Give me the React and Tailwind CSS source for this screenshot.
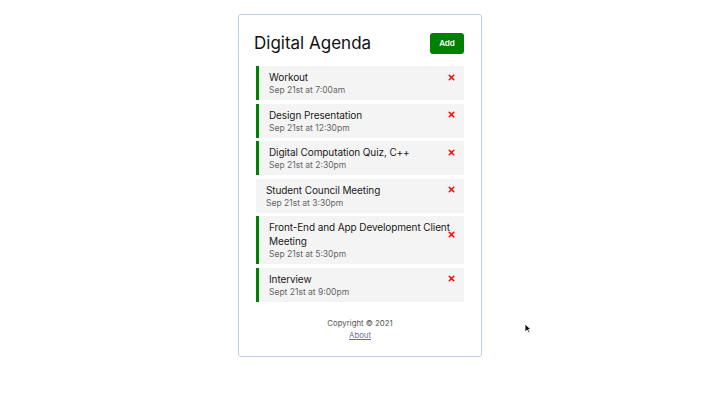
import { X } from "lucide-react";

const tasks = [
  { id: 1, text: "Workout", day: "Sep 21st at 7:00am", reminder: true },
  { id: 2, text: "Design Presentation", day: "Sep 21st at 12:30pm", reminder: true },
  { id: 3, text: "Digital Computation Quiz, C++", day: "Sep 21st at 2:30pm", reminder: true },
  { id: 4, text: "Student Council Meeting", day: "Sep 21st at 3:30pm", reminder: false },
  { id: 5, text: "Front-End and App Development Client Meeting", day: "Sep 21st at 5:30pm", reminder: true },
  { id: 6, text: "Interview", day: "Sept 21st at 9:00pm", reminder: true },
];

function Task({ task }) {
  return (
    <div
      className={`bg-[#f4f4f4] py-[4px] pr-[8px] ${
        task.reminder ? "border-l-[3px] border-[#008000] pl-[10px]" : "pl-[10px]"
      }`}
    >
      <h3 className="flex items-center justify-between text-[10px] leading-[14px] text-[#1a1a1a]">
        <span className="tracking-[-0.1px]">{task.text}</span>
        <X className="-ml-[6px] h-[9px] w-[9px] shrink-0 text-[#ff0000]" strokeWidth={4} />
      </h3>
      <p className="text-[8.5px] leading-[12px] text-[#666]">{task.day}</p>
    </div>
  );
}

export default function App() {
  return (
    <div className="relative min-h-[405px] bg-white pt-[14px] font-['Inter',sans-serif]">
      <div className="mx-auto w-[244px] rounded-[3px] border border-[#bcd2ea] px-[17px] pt-[15px] pb-[15px]">
        <header className="mb-[10px] flex items-center justify-between">
          <h1 className="-ml-[2px] text-[17px] leading-[26px] text-[#111]">Digital Agenda</h1>
          <button className="h-[21px] w-[34px] rounded-[3px] bg-[#008000] text-[8px] font-semibold text-white">
            Add
          </button>
        </header>

        <div className="flex flex-col gap-[3.5px]">
          {tasks.map((task) => (
            <Task key={task.id} task={task} />
          ))}
        </div>

        <footer className="mt-[15px] text-center text-[7.8px] leading-[12px] text-[#555]">
          <p>Copyright &copy; 2021</p>
          <a href="#" className="text-[#6b6b9e] underline">
            About
          </a>
        </footer>
      </div>

      <svg
        className="absolute left-[524px] top-[323px]"
        width="8"
        height="11"
        viewBox="0 0 8 11"
      >
        <path d="M1 1 L1 9 L3 7 L5 10 L6 9.5 L4.5 6.5 L7 6.5 Z" fill="#111" stroke="#fff" strokeWidth="0.8" />
      </svg>
    </div>
  );
}
